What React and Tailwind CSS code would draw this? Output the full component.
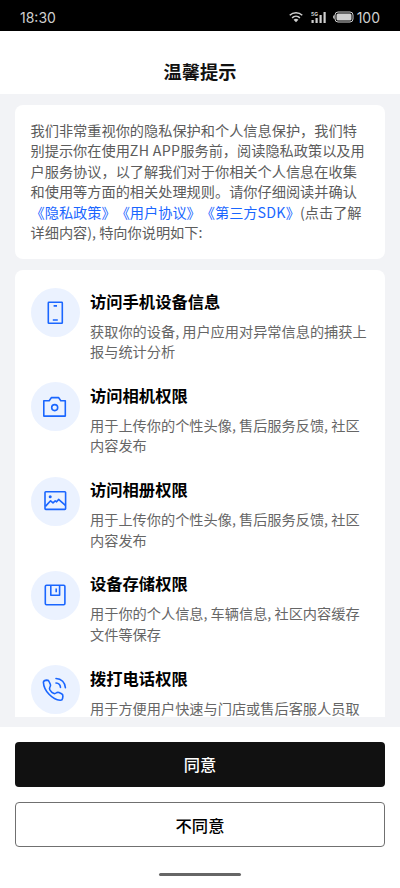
import React from 'react';

const PhoneIcon = () => (
  <svg width="26" height="26" viewBox="0 0 26 26" fill="none" stroke="#1a66ff" strokeWidth="1.6">
    <rect x="6.3" y="2.3" width="14" height="21" rx="0.6" />
    <path d="M11.6 5.9h3.4M10.8 20h5" />
  </svg>
);

const CameraIcon = () => (
  <svg width="26" height="26" viewBox="0 0 26 26" fill="none" stroke="#1a66ff" strokeWidth="1.6" strokeLinejoin="round">
    <path d="M1.8 6.7h5.4l2.3-3.1h7l2.3 3.1h4.5v15.4H1.8z" />
    <circle cx="12.7" cy="13.6" r="3" />
  </svg>
);

const AlbumIcon = () => (
  <svg width="26" height="26" viewBox="0 0 26 26" fill="none" stroke="#1a66ff" strokeWidth="1.6" strokeLinejoin="round">
    <rect x="3" y="3.8" width="20.6" height="17.6" rx="0.8" />
    <path d="M3.4 18.4l5.2-5.6 2.4 2 2.2-2 1.400 1 2-2.400 6.800 6" />
    <circle cx="8.200" cy="8.700" r="1.500" fill="#1a66ff" stroke="none" />
  </svg>
);

const StorageIcon = () => (
  <svg width="26" height="26" viewBox="0 0 26 26" fill="none" stroke="#1a66ff" strokeWidth="1.6" strokeLinejoin="round">
    <rect x="3.3" y="3.2" width="19.6" height="19.6" rx="1.2" />
    <path d="M8.8 3.2v10h8.8v-10M14.200 6.600v3.600" />
  </svg>
);

const CallIcon = () => (
  <svg width="26" height="26" viewBox="0 0 26 26" fill="none" stroke="#1a66ff" strokeWidth="1.6" strokeLinecap="round" strokeLinejoin="round">
    <path d="M1.4 5.200C1.600 3.600 3.200 3.200 4.900 3.100c1.400 0 2 .7 2.400 1.900l1.100 2.500c.4 1.100.1 1.700-.5 2.600-.6.900-.6 1.600 0 2.700.9 1.500 2.200 2.800 3.600 3.500 1 .5 1.800.4 2.600-.3 1-.8 1.800-.9 2.900-.4l2.600 1.200c1.100.6 1.400 1.200 1.300 2.400l-.3 2.200c-.2 1.400-1.100 2-2.500 1.900C10.500 22.600 1.800 14 1.400 5.200z" />
    <path d="M14 1.500c5.400.2 9.200 4 9.400 9.300M14 6c2.600.2 4.300 1.800 4.500 4.400" />
  </svg>
);

const permissions = [
  { title: '访问手机设备信息', lines: ['获取你的设备, 用户应用对异常信息的捕获上', '报与统计分析'], icon: <PhoneIcon /> },
  { title: '访问相机权限', lines: ['用于上传你的个性头像, 售后服务反馈, 社区', '内容发布'], icon: <CameraIcon /> },
  { title: '访问相册权限', lines: ['用于上传你的个性头像, 售后服务反馈, 社区', '内容发布'], icon: <AlbumIcon /> },
  { title: '设备存储权限', lines: ['用于你的个人信息, 车辆信息, 社区内容缓存', '文件等保存'], icon: <StorageIcon /> },
  { title: '拨打电话权限', lines: ['用于方便用户快速与门店或售后客服人员取'], icon: <CallIcon /> },
];

function StatusBar() {
  return (
    <div className="flex h-[31px] shrink-0 items-center justify-between bg-black pt-[3px] pr-[20px] pl-[20px] font-['Inter',sans-serif] text-[14px] text-[#cfcfcf]">
      <span>18:30</span>
      <div className="flex items-center">
        <svg width="14" height="12" viewBox="0 0 15 12" fill="none" stroke="#cfcfcf" strokeWidth="1.6">
          <path d="M.8 4.2c3.8-3.7 9.600-3.700 13.400 0M3.300 6.900c2.400-2.300 6-2.300 8.400 0" />
          <path d="M4.900 9c1.600-1.400 3.600-1.400 5.200 0l-2.600 2.700z" fill="#cfcfcf" stroke="none" />
        </svg>
        <svg className="ml-[8px]" width="16" height="12" viewBox="0 0 16 12" fill="#cfcfcf">
          <text x="0" y="4.6" fontSize="5" fontWeight="700">5G</text>
          <rect x="0.500" y="9" width="2.200" height="3" />
          <rect x="4.500" y="7" width="2.200" height="5" />
          <rect x="8.500" y="4" width="2.200" height="8" />
          <rect x="12.500" y="1" width="2.200" height="11" />
        </svg>
        <svg className="ml-[6px]" width="21" height="12" viewBox="0 0 21 12">
          <rect x="2" y="1" width="18" height="10" rx="3" fill="none" stroke="#cfcfcf" />
          <rect x="3.500" y="2.500" width="15" height="7" rx="1.500" fill="#cfcfcf" />
          <path d="M1.500 4v4C.5 7.600.1 7 .1 6s.4-1.600 1.400-2z" fill="#cfcfcf" />
        </svg>
        <span className="ml-[3px]">100</span>
      </div>
    </div>
  );
}

export default function App() {
  return (
    <div
      lang="zh-CN"
      className="flex h-[888px] w-[400px] flex-col overflow-hidden bg-white font-['Noto_Sans_CJK_SC',sans-serif] whitespace-nowrap [text-spacing-trim:space-all]"
    >
      <StatusBar />

      <header className="flex h-[63px] shrink-0 items-end justify-center pb-[10px]">
        <h1 className="text-[18.2px] leading-[26px] font-bold text-[#111]">温馨提示</h1>
      </header>

      <main className="flex h-[633px] shrink-0 flex-col gap-[11px] bg-[#f2f3f6] px-[15px] pt-[10.5px] pb-[10px]">
        {/* Intro */}
        <section className="h-[154px] shrink-0 rounded-[8px] bg-white px-[15.5px] pt-[15px] text-[14.2px] leading-[20.6px] text-[#5c5c5c]">
          <p>我们非常重视你的隐私保护和个人信息保护，我们特</p>
          <p>别提示你在使用<span className="tracking-[0.3px]">ZH APP</span>服务前，阅读隐私政策以及用</p>
          <p>户服务协议，以了解我们对于你相关个人信息在收集</p>
          <p>和使用等方面的相关处理规则。请你仔细阅读并确认</p>
          <p>
            <span className="text-[#1a66ff]">
              《隐私政策》《用户协议》《第三方<span className="tracking-[0.3px]">SDK</span>》
            </span>
            (点击了解
          </p>
          <p>详细内容), 特向你说明如下:</p>
        </section>

        {/* Permission list, cut off by the bottom of the scroll area */}
        <section className="min-h-0 flex-1 overflow-hidden rounded-t-[8px] bg-white px-[15.5px] pt-[18.5px]">
          {permissions.map((item) => (
            <div key={item.title} className="flex h-[94.3px] gap-[10.5px]">
              <div className="flex size-[49px] shrink-0 items-center justify-center rounded-full bg-[#ebf2ff]">
                {item.icon}
              </div>
              <div className="-mt-[0.5px]">
                <h2 className="text-[16.3px] leading-[26px] font-bold text-black">{item.title}</h2>
                <div className="mt-[7px] text-[14.2px] leading-[20.6px] text-[#666]">
                  {item.lines.map((line) => (
                    <p key={line}>{line}</p>
                  ))}
                </div>
              </div>
            </div>
          ))}
        </section>
      </main>

      <footer className="flex flex-1 flex-col items-center px-[15px] pt-[15px] text-[16.3px] font-medium">
        <button className="h-[45px] w-full rounded-[4px] bg-[#111] text-white">同意</button>
        <button className="mt-[15px] h-[45px] w-full rounded-[4px] border border-[#707070] pt-px text-black">不同意</button>
        <div className="mt-[26px] h-[3px] w-[82px] rounded-full bg-[#666]" />
      </footer>
    </div>
  );
}
